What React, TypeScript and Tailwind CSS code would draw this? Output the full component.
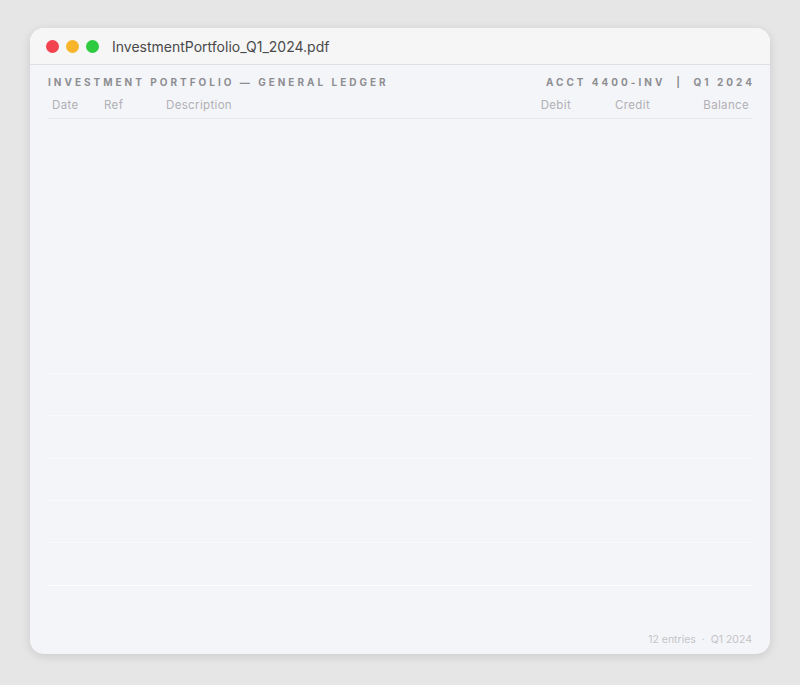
export default function App() {
  const rows = Array.from({ length: 11 }, (_, i) => i);
  return (
    <div className="w-[800px] h-[685px] bg-[#e7e6e6] pt-[28px] pl-[30px]" style={{ fontFamily: 'Inter, "Liberation Sans", sans-serif' }}>
      <div className="w-[740px] h-[626px] rounded-[14px] bg-[#f4f5f9] shadow-[0_2px_10px_rgba(0,0,0,0.12)] overflow-hidden flex flex-col">
        <div className="h-[37px] bg-[#f6f6f7] border-b border-[#e0e0e2] flex items-center pl-[16px]">
          <span className="w-[13px] h-[13px] rounded-full bg-[#f2434f]" />
          <span className="w-[13px] h-[13px] rounded-full bg-[#f7b52c] ml-[7px]" />
          <span className="w-[13px] h-[13px] rounded-full bg-[#2ecb41] ml-[7px]" />
          <span className="ml-[13px] text-[14px] text-[#4a4a4a]">InvestmentPortfolio_Q1_2024.pdf</span>
        </div>
        <div className="flex justify-between px-[18px] pt-[10px] text-[10px] font-bold tracking-[0.3em] text-[#8e8e92]">
          <span>INVESTMENT PORTFOLIO — GENERAL LEDGER</span>
          <span className="mr-[-0.3em]">ACCT 4400-INV &nbsp;|&nbsp; Q1 2024</span>
        </div>
        <div className="flex items-center mx-[18px] h-[26px] mt-[3px] text-[11.5px] tracking-[0.03em] text-[#b0b0b4] border-b border-[#e6e7ea]">
          <span className="ml-[4px] w-[52px]">Date</span>
          <span className="w-[62px]">Ref</span>
          <span className="flex-1">Description</span>
          <span className="w-[70px] text-right pr-[15px]">Debit</span>
          <span className="w-[76px] text-right pr-[12px]">Credit</span>
          <span className="w-[90px] text-right pr-[3px]">Balance</span>
        </div>
        <div className="mx-[18px] flex flex-col">
          {rows.map((i) => (
            <div
              key={i}
              className={
                'h-[42.45px] border-b ' +
                (i === 10 ? 'border-[#fdfdfe]' : i >= 5 ? 'border-[#f9f9fb]' : 'border-transparent')
              }
            />
          ))}
        </div>
        <div className="flex-1" />
        <div className="flex justify-end px-[18px] pb-[6px] text-[10.5px] text-[#c4c4c8]">12 entries &nbsp;·&nbsp; Q1 2024</div>
      </div>
    </div>
  );
}
